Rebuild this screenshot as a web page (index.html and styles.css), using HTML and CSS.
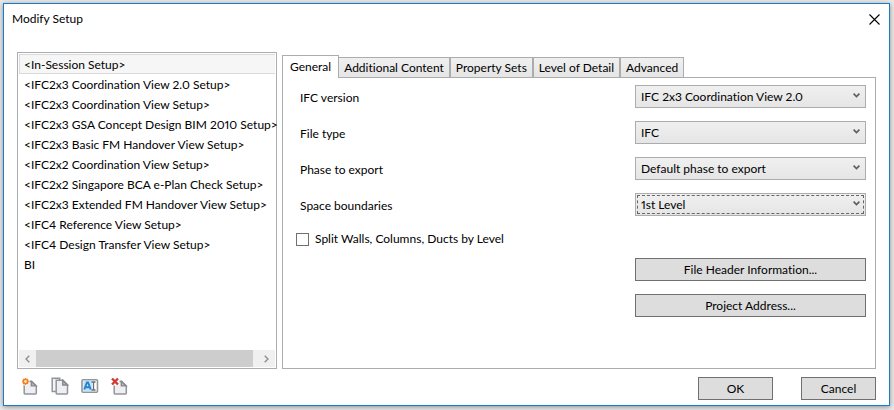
FILE: index.html
```html
<!DOCTYPE html>
<html lang="en">
<head>
<meta charset="utf-8">
<title>Modify Setup</title>
<link rel="stylesheet" href="styles.css">
</head>
<body>
<main class="dialog">
  <header class="titlebar">
    <h1 class="title">Modify Setup</h1>
    <button class="close" type="button" aria-label="Close">
      <svg width="11" height="11" viewBox="0 0 11 11"><path d="M.5 .5l10 10M10.5 .5l-10 10" stroke="#000" stroke-width="1.1" fill="none"/></svg>
    </button>
  </header>

  <div class="content">
    <section class="setups">
      <ul class="setup-list">
        <li class="setup selected">&lt;In-Session Setup&gt;</li>
        <li class="setup">&lt;IFC2x3 Coordination View 2.0 Setup&gt;</li>
        <li class="setup">&lt;IFC2x3 Coordination View Setup&gt;</li>
        <li class="setup">&lt;IFC2x3 GSA Concept Design BIM 2010 Setup&gt;</li>
        <li class="setup">&lt;IFC2x3 Basic FM Handover View Setup&gt;</li>
        <li class="setup">&lt;IFC2x2 Coordination View Setup&gt;</li>
        <li class="setup">&lt;IFC2x2 Singapore BCA e-Plan Check Setup&gt;</li>
        <li class="setup">&lt;IFC2x3 Extended FM Handover View Setup&gt;</li>
        <li class="setup">&lt;IFC4 Reference View Setup&gt;</li>
        <li class="setup">&lt;IFC4 Design Transfer View Setup&gt;</li>
        <li class="setup">BI</li>
      </ul>
      <div class="scrollbar">
        <button class="scroll-arrow" type="button" aria-label="Scroll left">
          <svg width="5" height="8" viewBox="0 0 5 8"><path d="M4.3 .7L1 4l3.300 3.300" stroke="#8c8c8c" stroke-width="1.300" fill="none"/></svg>
        </button>
        <div class="scroll-thumb"></div>
        <button class="scroll-arrow" type="button" aria-label="Scroll right">
          <svg width="5" height="8" viewBox="0 0 5 8"><path d="M.7 .7L4 4 .7 7.300" stroke="#8c8c8c" stroke-width="1.300" fill="none"/></svg>
        </button>
      </div>
    </section>

    <section class="settings">
      <div class="tabs" role="tablist">
        <button class="tab active" type="button" role="tab" aria-selected="true">General</button>
        <button class="tab" type="button" role="tab">Additional Content</button>
        <button class="tab" type="button" role="tab">Property Sets</button>
        <button class="tab" type="button" role="tab">Level of Detail</button>
        <button class="tab" type="button" role="tab">Advanced</button>
      </div>
      <form class="panel">
        <div class="field">
          <label for="version">IFC version</label>
          <div class="combo">
            <select id="version"><option>IFC 2x3 Coordination View 2.0</option></select>
            <svg class="chevron" width="7" height="5" viewBox="0 0 7 5"><path d="M.6 .6L3.500 3.500 6.400 .6" stroke="#606060" stroke-width="1.700" fill="none"/></svg>
          </div>
        </div>
        <div class="field">
          <label for="filetype">File type</label>
          <div class="combo">
            <select id="filetype"><option>IFC</option></select>
            <svg class="chevron" width="7" height="5" viewBox="0 0 7 5"><path d="M.6 .6L3.500 3.500 6.400 .6" stroke="#606060" stroke-width="1.700" fill="none"/></svg>
          </div>
        </div>
        <div class="field">
          <label for="phase">Phase to export</label>
          <div class="combo">
            <select id="phase"><option>Default phase to export</option></select>
            <svg class="chevron" width="7" height="5" viewBox="0 0 7 5"><path d="M.6 .6L3.500 3.500 6.400 .6" stroke="#606060" stroke-width="1.700" fill="none"/></svg>
          </div>
        </div>
        <div class="field">
          <label for="space">Space boundaries</label>
          <div class="combo focused">
            <select id="space"><option>1st Level</option></select>
            <svg class="chevron" width="7" height="5" viewBox="0 0 7 5"><path d="M.6 .6L3.500 3.500 6.400 .6" stroke="#606060" stroke-width="1.700" fill="none"/></svg>
          </div>
        </div>
        <label class="check"><input type="checkbox">Split Walls, Columns, Ducts by Level</label>
        <div class="actions">
          <button class="button" type="button">File Header Information...</button>
          <button class="button" type="button">Project Address...</button>
        </div>
      </form>
    </section>
  </div>

  <footer class="footer">
    <div class="tools">
      <button class="tool" type="button" aria-label="New setup">
        <svg width="18" height="18" viewBox="0 0 18 18">
          <path d="M3.200 4.500h7.600l4.500 4.500v7.300q0 .7-.7.7H3.900q-.7 0-.7-.7z" fill="#eeeef3" stroke="#92969b" stroke-width="1.500"/>
          <path d="M10.300 4.300v4.500h4.800z" fill="#b5b8bc" stroke="#85898e" stroke-width="1.300"/>
          <circle cx="4.500" cy="4.500" r="3.900" fill="#fff"/>
          <path d="M4.500 1v7M1 4.500h7M2 2l5 5M7 2l-5 5" stroke="#f7a04a" stroke-width="1.400"/>
          <circle cx="4.500" cy="4.500" r="2.200" fill="#ffe3b5" stroke="#f47c20" stroke-width="1.600"/>
        </svg>
      </button>
      <button class="tool" type="button" aria-label="Duplicate setup">
        <svg width="18" height="18" viewBox="0 0 18 18">
          <path d="M5 14.500H1.200V1.200h7.500V4" fill="#f4f4f7" stroke="#92969b" stroke-width="1.500"/>
          <path d="M5.200 3.200h6.800l4.500 4.500v8.600q0 .7-.7.7H5.900q-.7 0-.7-.7z" fill="#eeeef3" stroke="#92969b" stroke-width="1.500"/>
          <path d="M11.700 3.200V8h4.800z" fill="#b5b8bc" stroke="#85898e" stroke-width="1.300"/>
        </svg>
      </button>
      <button class="tool" type="button" aria-label="Rename setup">
        <svg width="18" height="18" viewBox="0 0 18 18">
          <rect x="1" y="2.700" width="15.500" height="12.500" rx="1" fill="#fff" stroke="#92969b" stroke-width="1.600"/>
          <rect x="2.300" y="4" width="8.700" height="10" fill="#bfe3f8"/>
          <path d="M3.300 12.500L5.900 5.500h1.200L9.700 12.500M4.200 10.200h4.600" fill="none" stroke="#2583cf" stroke-width="1.900"/>
          <path d="M10.500 5h4M12.500 5v8M10.500 13h4" fill="none" stroke="#676c72" stroke-width="1.300"/>
        </svg>
      </button>
      <button class="tool" type="button" aria-label="Delete setup">
        <svg width="18" height="18" viewBox="0 0 18 18">
          <path d="M3.200 4.500h7.600l4.500 4.500v7.300q0 .7-.7.7H3.900q-.7 0-.7-.7z" fill="#eeeef3" stroke="#92969b" stroke-width="1.500"/>
          <path d="M10.300 4.300v4.500h4.800z" fill="#b5b8bc" stroke="#85898e" stroke-width="1.300"/>
          <path d="M0 0h8.500v8.500H0z" fill="#fff"/>
          <path d="M1 1.500l6 6M7 1.500l-6 6" stroke="#cd3b30" stroke-width="2.400"/>
        </svg>
      </button>
    </div>
    <div class="confirm">
      <button class="button" type="button">OK</button>
      <button class="button" type="button">Cancel</button>
    </div>
  </footer>
</main>
</body>
</html>
```

FILE: styles.css
```css
* {
  box-sizing: border-box;
}

body {
  margin: 0;
  min-height: 100vh;
  padding: 3px 4px 4px 3px;
  display: flex;
  background: #e9e9e9;
  color: #000;
  font: 12px/16px "Segoe UI", Lato, "Open Sans", sans-serif;
  font-variant-ligatures: none;
  font-variant-numeric: proportional-nums;
}

button,
select {
  font: inherit;
  color: inherit;
  margin: 0;
}

.dialog {
  flex: 1;
  min-width: 0;
  display: flex;
  flex-direction: column;
  background: #fff;
  border: 1px solid #1a7bc8;
  box-shadow: 0 1px 5px rgba(0, 0, 0, .4);
}

.titlebar {
  display: flex;
  align-items: center;
  justify-content: space-between;
  height: 30px;
  padding: 0 9px 0 8px;
}

.title {
  margin: 0;
  font-size: 12px;
  font-weight: 400;
}

.close,
.tool,
.scroll-arrow {
  display: flex;
  align-items: center;
  justify-content: center;
  padding: 0;
  border: 0;
  background: none;
}

.content {
  flex: 1;
  display: grid;
  grid-template-columns: 260px minmax(0, 1fr);
  gap: 5px;
  padding: 18px 13px 0;
}

.setups {
  display: flex;
  flex-direction: column;
  justify-content: space-between;
  min-width: 0;
  border: 1px solid #abadb3;
  padding: 1px;
}

.setup-list {
  margin: 0;
  padding: 0;
  list-style: none;
}

.setup {
  height: 20px;
  padding: 2px 0 0 4px;
  border: 1px solid transparent;
  white-space: nowrap;
}

.selected {
  background: #f6f6f6;
  border-color: #dadada;
  border-right: 0;
}

.scrollbar {
  display: flex;
  height: 17px;
  background: #f0f0f0;
}

.scroll-arrow {
  width: 17px;
}

.scroll-thumb {
  flex: 1;
  margin-right: 5px;
  background: #cdcdcd;
}

.settings {
  display: flex;
  flex-direction: column;
  padding-top: 3px;
}

.tabs {
  display: flex;
  align-items: flex-end;
  height: 22px;
}

.tab {
  height: 20px;
  padding: 1px 5px 0;
  border: 1px solid #acacac;
  border-bottom: 0;
  background: linear-gradient(#f0f0f0, #e5e5e5);
  white-space: nowrap;
}

.tab.active {
  position: relative;
  height: 23px;
  margin-bottom: -1px;
  padding: 0 7px 1px;
  background: #fff;
}

.active + .tab {
  border-left: 0;
}

.panel {
  flex: 1;
  display: flex;
  flex-direction: column;
  border: 1px solid #acacac;
  padding: 7px 9px 0 13px;
}

.field {
  display: flex;
  align-items: center;
  justify-content: space-between;
  height: 23px;
  margin-bottom: 13px;
}

.field label {
  padding: 2px 4px 0;
}

.combo {
  display: grid;
  align-items: center;
  width: 231px;
}

.combo > * {
  grid-area: 1 / 1;
}

.combo select {
  appearance: none;
  width: 100%;
  height: 23px;
  padding: 1px 20px 0 5px;
  border: 1px solid #acacac;
  border-radius: 0;
  background: linear-gradient(#f0f0f0, #e5e5e5);
}

.chevron {
  justify-self: end;
  margin: 0 6px 2px 0;
  pointer-events: none;
}

.focused select {
  outline: 1px dashed #666;
  outline-offset: -3px;
}

.check {
  display: flex;
  align-items: center;
  gap: 6px;
  align-self: flex-start;
  height: 20px;
}

.check input {
  appearance: none;
  width: 13px;
  height: 13px;
  margin: 0;
  border: 1px solid #707070;
  background: #fff;
}

.actions {
  display: flex;
  flex-direction: column;
  align-self: flex-end;
  gap: 13px;
  width: 231px;
  margin-top: 9px;
}

.button {
  height: 23px;
  padding: 0 8px;
  border: 1px solid #707070;
  background: #ddd;
}

.footer {
  display: flex;
  justify-content: space-between;
  align-items: flex-start;
  padding: 8px 13px 5px 17px;
}

.tools {
  display: flex;
  gap: 12px;
}

.confirm {
  display: flex;
  gap: 28px;
}

.confirm .button {
  width: 75px;
}
```
